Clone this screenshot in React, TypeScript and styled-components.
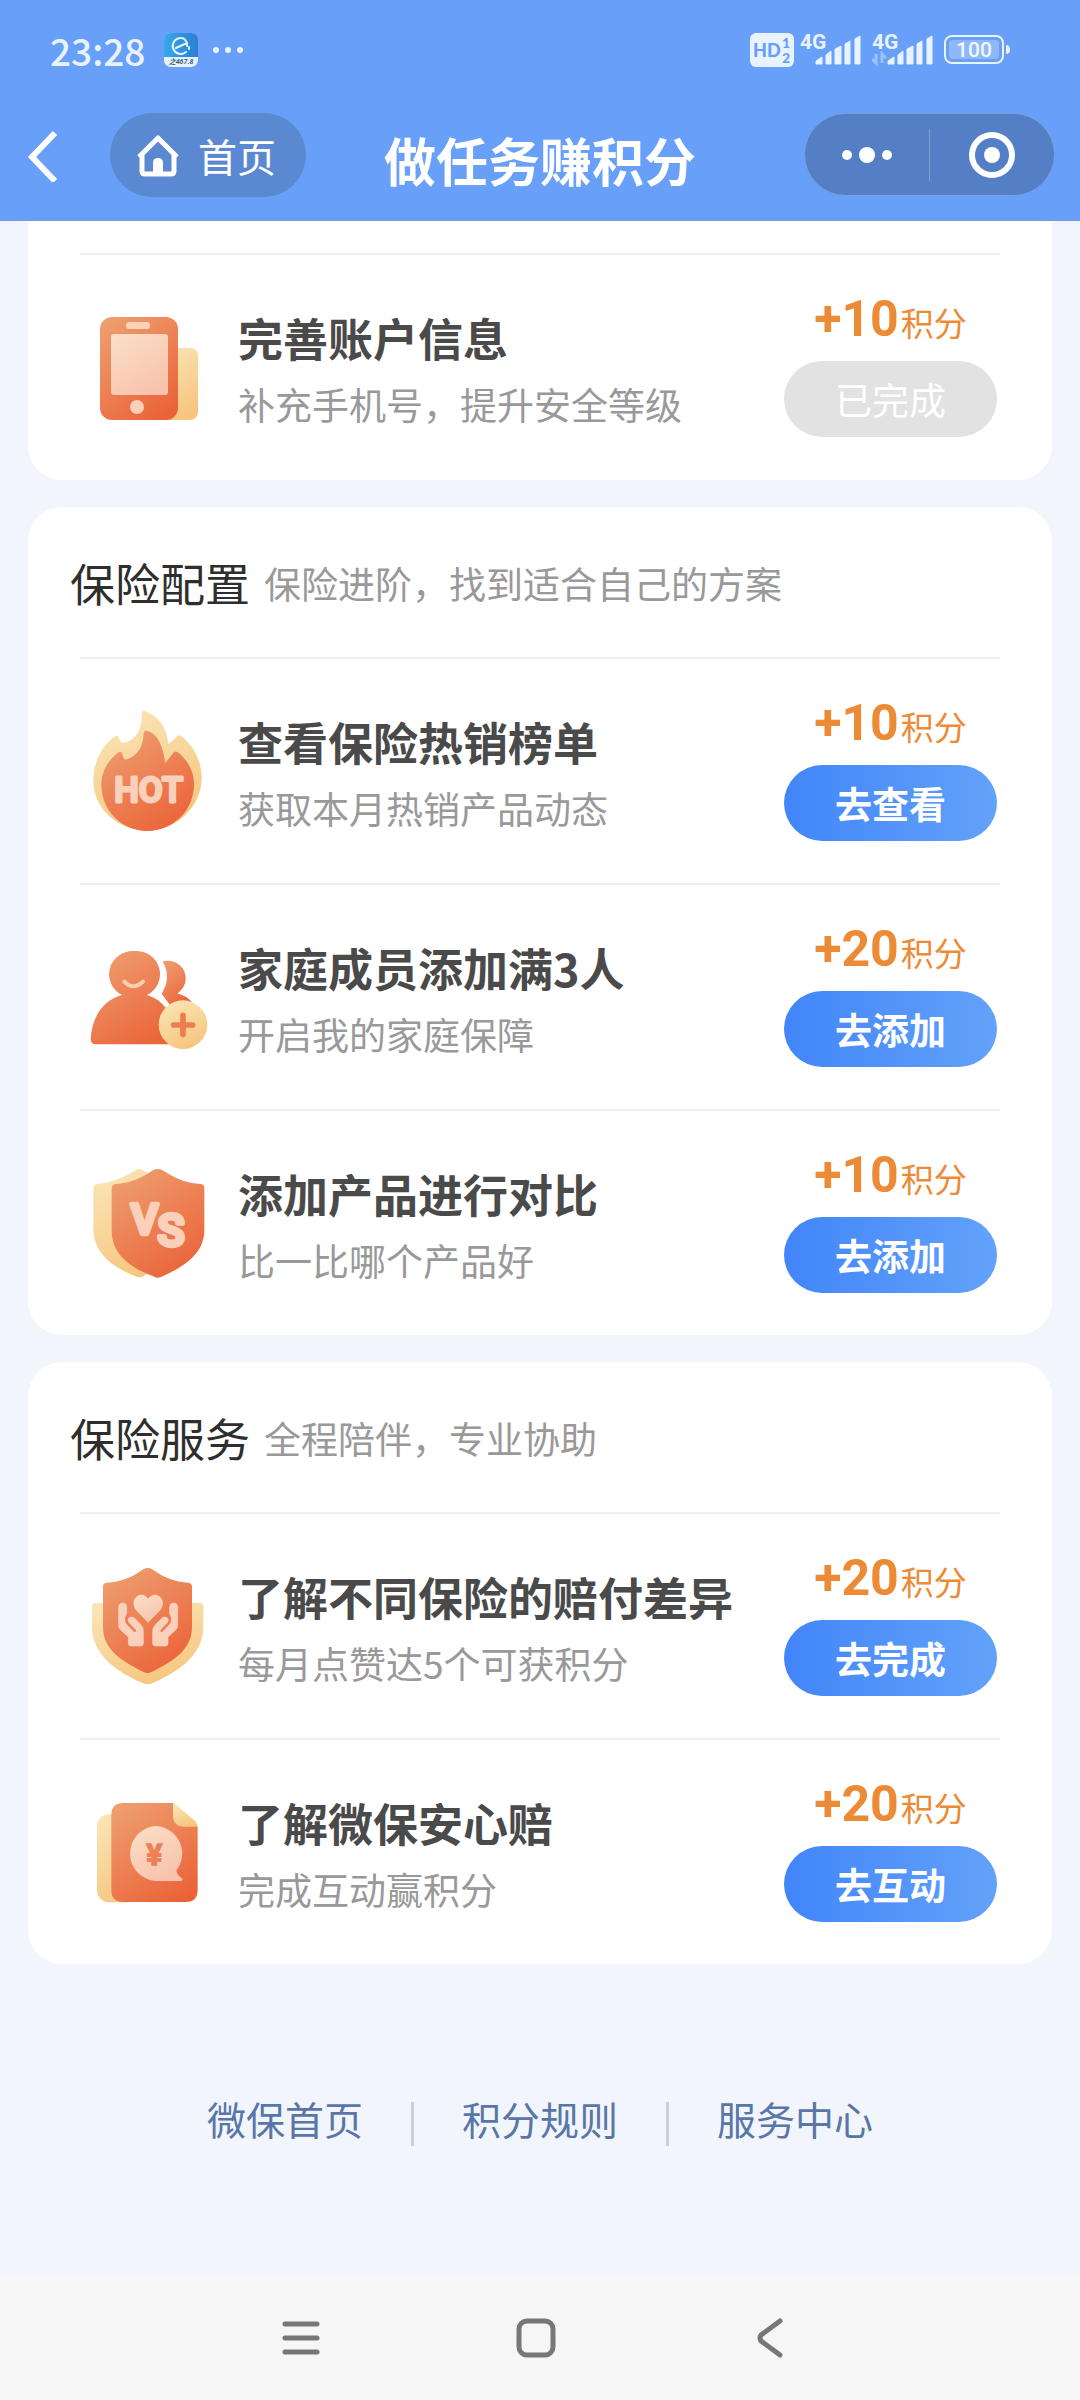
import React from 'react';
import styled, { createGlobalStyle } from 'styled-components';

const GlobalStyle = createGlobalStyle`
  * { box-sizing: border-box; }
  html, body { margin: 0; padding: 0; }
  body {
    background: #f2f5fb;
    font-family: "Noto Sans CJK SC", "Noto Sans", sans-serif;
  }
  button { font: inherit; border: 0; padding: 0; margin: 0; background: none; color: inherit; cursor: pointer; }
  h1, h2, h3, p, ul { margin: 0; padding: 0; font-weight: 400; }
  ul { list-style: none; }
  svg { display: block; flex: none; }
`;

const Page = styled.div`
  min-height: 100vh;
  display: flex;
  flex-direction: column;
`;

const Header = styled.header`
  background: #689ff8;
  border-bottom: 1px solid #759dda;
  color: #fff;
`;

const StatusBar = styled.div`
  height: 100px;
  padding: 0 70px 0 50px;
  display: flex;
  align-items: center;
  justify-content: space-between;
  color: #e9f2ff;
`;

const StatusGroup = styled.div<{ $gap: number }>`
  display: flex;
  align-items: center;
  gap: ${p => p.$gap}px;
`;

const Clock = styled.time`
  font-size: 37px;
  line-height: 44px;
  font-weight: 500;
`;

const NavBar = styled.nav`
  height: 120px;
  padding: 13px 25px 0;
  display: grid;
  grid-template-columns: 1fr auto 1fr;
  align-items: start;
`;

const NavLeft = styled.div`
  display: flex;
  align-items: center;
  gap: 49px;
`;

const BackButton = styled.button`
  width: 36px;
  height: 84px;
  display: grid;
  place-items: center;
`;

const HomeButton = styled.button`
  height: 84px;
  padding: 0 30px 0 26px;
  display: flex;
  align-items: center;
  gap: 18px;
  border-radius: 42px;
  background: #5a89d1;
  font-size: 39px;
  line-height: 84px;
`;

const PageTitle = styled.h1`
  font-size: 52px;
  line-height: 94px;
  font-weight: 700;
`;

const Capsule = styled.div`
  justify-self: end;
  width: 251px;
  height: 83px;
  display: flex;
  align-items: center;
  border: 1px solid #779fdc;
  border-radius: 42px;
  background: #547fc4;
`;

const CapsuleButton = styled.button`
  flex: 1;
  height: 100%;
  display: grid;
  place-items: center;
`;

const CapsuleDivider = styled.span`
  width: 1px;
  height: 52px;
  background: #7d9fd3;
`;

const Main = styled.main`
  padding: 0 28px;
  display: flex;
  flex-direction: column;
  gap: 27px;
`;

const Card = styled.section<{ $continued?: boolean }>`
  background: #fff;
  border-radius: ${p => (p.$continued ? '0 0 34px 34px' : '34px')};
  padding: ${p => (p.$continued ? '32px 0 1px' : '0')};
`;

const CardHeader = styled.header`
  height: 150px;
  padding: 2px 42px 0;
  display: flex;
  align-items: center;
  gap: 14px;
`;

const CardTitle = styled.h2`
  font-size: 45px;
  line-height: 64px;
  color: #2e2e2e;
`;

const Caption = styled.p`
  font-size: 37px;
  line-height: 48px;
  color: #999;
`;

const TaskRow = styled.li`
  height: 226px;
  margin: 0 52px;
  padding: 0 3px;
  border-top: 2px solid #eee;
  display: flex;
  align-items: center;
  gap: 27px;
`;

const TaskText = styled.div`
  flex: 1;
  min-width: 0;
  display: flex;
  flex-direction: column;
  gap: 10px;
  white-space: nowrap;
`;

const TaskTitle = styled.h3`
  font-size: 45px;
  line-height: 64px;
  font-weight: 700;
  color: #4a4a4a;
`;

const TaskAction = styled.div`
  width: 213px;
  display: flex;
  flex-direction: column;
  align-items: center;
  gap: 16px;
`;

const Points = styled.p`
  height: 48px;
  display: flex;
  align-items: baseline;
  gap: 2px;
  color: #ec8a35;
  font-size: 33px;
  line-height: 44px;
`;

const PointsValue = styled.strong`
  font-family: Roboto, "Noto Sans", sans-serif;
  font-size: 50px;
  font-weight: 700;
`;

const TaskButton = styled.button`
  width: 100%;
  height: 76px;
  border-radius: 38px;
  background: linear-gradient(90deg, #4285f9, #62a2fa);
  color: #fff;
  font-size: 37px;
  line-height: 76px;
  font-weight: 700;
  &:disabled {
    background: #e2e2e2;
    font-weight: 400;
    cursor: default;
  }
`;

const FooterLinks = styled.footer`
  margin-top: 126px;
  padding-bottom: 128px;
  display: flex;
  justify-content: center;
  align-items: flex-end;
  gap: 48px;
`;

const FooterLink = styled.a`
  font-size: 39px;
  line-height: 56px;
  color: #5877a8;
  text-decoration: none;
`;

const FooterDivider = styled.span`
  width: 3px;
  height: 44px;
  background: #ccd0d6;
`;

const SystemNav = styled.nav`
  margin-top: auto;
  height: 124px;
  padding: 0 191px 0 183px;
  display: flex;
  background: #f6f6f6;
`;

const SystemButton = styled.button`
  flex: 1;
  display: grid;
  place-items: center;
`;

const Gradients = () => (
  <svg width="0" height="0" style={{ position: 'absolute' }} aria-hidden="true">
    <defs>
      <linearGradient id="coral" x1="0.2" y1="0" x2="0.8" y2="1">
        <stop offset="0" stopColor="#ee9d6e" />
        <stop offset="1" stopColor="#eb6238" />
      </linearGradient>
      <linearGradient id="sand" x1="0.3" y1="0" x2="0.7" y2="1">
        <stop offset="0" stopColor="#fae4b4" />
        <stop offset="1" stopColor="#f6c47c" />
      </linearGradient>
      <linearGradient id="blush" x1="0.1" y1="0" x2="0.7" y2="1">
        <stop offset="0" stopColor="#fbdfc6" />
        <stop offset="1" stopColor="#f8c2ac" />
      </linearGradient>
      <linearGradient id="appBlue" x1="0" y1="0" x2="1" y2="0">
        <stop offset="0" stopColor="#35a8ee" />
        <stop offset="1" stopColor="#2b7fd2" />
      </linearGradient>
    </defs>
  </svg>
);

const PhoneIcon = () => (
  <svg width="128" height="128" viewBox="83 302 128 128">
    <rect x="150" y="347" width="48" height="72" rx="8" fill="url(#sand)" />
    <rect x="100" y="316" width="78" height="103" rx="12" fill="url(#coral)" />
    <rect x="126" y="321" width="24" height="7" rx="3" fill="#fbd3b8" />
    <rect x="111" y="333" width="57" height="61" rx="3" fill="url(#blush)" />
    <circle cx="137" cy="406" r="7" fill="#fbd0ba" />
  </svg>
);

const HotIcon = () => (
  <svg width="128" height="128" viewBox="69 78 384 384">
    <path
      fill="url(#sand)"
      d="M246 94Q249 86 258 91C300 108 322 145 325 190L350 167Q358 159 366 167C404 198 425 242 425 292C425 375 350 449 262 449C172 449 100 380 100 300C100 242 125 195 165 166Q171 161 176 169Q181 184 188 187C228 178 246 150 246 94Z"
    />
    <path
      fill="url(#coral)"
      d="M251 155Q254 148 262 150C298 160 310 205 316 246L339 216Q347 207 356 216C386 240 402 275 402 310C402 388 340 450 262 450C184 450 124 388 124 310C124 275 142 240 173 216Q182 208 186 217Q190 235 196 236C234 226 250 196 251 155Z"
    />
    <text
      x="266" y="363" textAnchor="middle" fontFamily="Roboto, sans-serif" fontWeight="500" fontSize="104"
      fill="#fad0ba" stroke="#fad0ba" strokeWidth="9" strokeLinejoin="round"
    >HOT</text>
  </svg>
);

const FamilyIcon = () => (
  <svg width="128" height="128" viewBox="69 66 384 384">
    <path
      fill="url(#coral)"
      d="M314 150C350 146 377 170 377 202C377 224 366 236 352 248C372 252 388 262 396 274L330 282L305 248C325 218 326 184 309 154Q309 150 314 150Z"
    />
    <path
      fill="url(#coral)"
      d="M222 120A72 70 0 0 1 261 252C310 266 345 315 350 380Q350 400 332 400H108Q92 400 92 384C96 318 128 268 186 252A72 70 0 0 1 222 120Z"
    />
    <path d="M193 212Q220 240 249 212" fill="none" stroke="#fbcfb4" strokeWidth="12" strokeLinecap="round" />
    <circle cx="369" cy="341" r="73" fill="url(#sand)" />
    <path d="M369 313V370M341 342H398" stroke="#eb7d50" strokeWidth="17" strokeLinecap="round" />
  </svg>
);

const VersusIcon = () => (
  <svg width="128" height="128" viewBox="69 54 384 384">
    <path
      fill="url(#sand)"
      d="M226 88Q238 80 250 88C280 108 315 122 350 128V270C350 330 310 370 250 406Q238 412 226 406C150 376 100 330 100 264V142Q100 130 112 129C155 126 190 110 226 88Z"
    />
    <path
      fill="url(#coral)"
      d="M279 88Q293 80 308 88C345 112 380 128 422 129Q433 130 433 142V266C433 335 380 372 308 406Q293 414 279 406C200 374 155 335 155 266V142Q155 130 167 129C208 128 244 112 279 88Z"
    />
    <g
      fontFamily="Roboto, sans-serif" fontWeight="500" fill="#fad0ba" stroke="#fad0ba"
      strokeWidth="13" strokeLinejoin="round"
    >
      <text x="254" y="280" textAnchor="middle" fontSize="126">V</text>
      <text x="333" y="314" textAnchor="middle" fontSize="134">S</text>
    </g>
  </svg>
);

const CareIcon = () => (
  <svg width="128" height="128" viewBox="69 96 384 384">
    <path
      fill="url(#sand)"
      d="M106 219H420Q430 219 430 230V290C430 375 355 425 276 460Q263 466 250 460C170 425 96 375 96 290V230Q96 219 106 219Z"
    />
    <path
      fill="url(#coral)"
      d="M250 118Q263 110 277 118C310 142 345 157 385 158Q396 159 396 170V290C396 360 340 392 275 426Q263 432 251 426C185 392 129 360 129 290V170Q129 159 140 158C182 157 216 142 250 118Z"
    />
    <path
      fill="url(#blush)"
      d="M264 278L230 243C216 228 217 203 238 195C250 192 259 198 264 206C270 198 280 192 291 195C312 203 314 228 299 243Z"
    />
    <g fill="#fad2bc" stroke="#fad2bc" strokeWidth="2" strokeLinejoin="round">
      <path d="M176 231Q176 219 188 219Q200 219 200 231V269L223 294L205 278Q200 268 209 262Q217 259 224 265L243 284Q250 292 250 303V340Q250 348 242 348H213Q205 348 205 340V321L182 300Q176 294 176 287Z" />
      <path d="M353 231Q353 219 341 219Q329 219 329 231V269L306 294L324 278Q329 268 320 262Q312 259 305 265L286 284Q278 292 278 303V340Q278 348 286 348H316Q324 348 324 340V321L347 300Q353 294 353 287Z" />
    </g>
    <g fill="none" stroke="#ec8057" strokeWidth="8" strokeLinecap="round" strokeLinejoin="round">
      <path d="M204 254Q195 268 203 280L224 302" />
      <path d="M325 254Q334 268 326 280L305 302" />
    </g>
  </svg>
);

const ClaimIcon = () => (
  <svg width="128" height="128" viewBox="69 774 384 384">
    <rect x="111" y="853" width="120" height="264" rx="36" fill="url(#sand)" />
    <path
      fill="url(#coral)"
      d="M190 819H339L413 890V1080Q413 1116 377 1116H190Q154 1116 154 1080V855Q154 819 190 819Z"
    />
    <path fill="url(#sand)" d="M339 822Q345 822 352 828L406 874Q413 882 413 890H372Q339 890 339 856Z" />
    <path
      fill="url(#blush)"
      d="M284 888A83 83 0 0 1 349 1022Q352 1036 366 1045Q370 1053 361 1053H284A83 83 0 0 1 284 888Z"
    />
    <text
      x="283" y="1006" textAnchor="middle" fontFamily="Roboto, sans-serif" fontWeight="700" fontSize="90"
      fill="#ec8057" stroke="#ec8057" strokeWidth="4"
    >¥</text>
  </svg>
);

const AppBadge = () => (
  <svg width="34" height="34" viewBox="0 0 34 34">
    <rect width="34" height="34" rx="7" fill="#e4f3fd" />
    <path d="M0 24V7Q0 0 7 0H27Q34 0 34 7V24Z" fill="url(#appBlue)" />
    <path
      d="M12 15L23 10Q21 5 17 5A8 8 0 1 0 22 19M23 10V13M25 16V14"
      fill="none" stroke="#e6f5ff" strokeWidth="2" strokeLinecap="round"
    />
    <text x="17" y="31" textAnchor="middle" fontFamily="Roboto, sans-serif" fontWeight="700" fontStyle="italic" fontSize="7" fill="#45617c">之467.8</text>
  </svg>
);

const MoreDots = () => (
  <svg width="32" height="8" viewBox="0 0 32 8">
    <circle cx="4" cy="4" r="3" fill="#e9f2ff" />
    <circle cx="16" cy="4" r="3" fill="#e9f2ff" />
    <circle cx="28" cy="4" r="3" fill="#e9f2ff" />
  </svg>
);

const HdBadge = () => (
  <svg width="44" height="34" viewBox="0 0 44 34">
    <rect width="44" height="34" rx="6" fill="#e9f2ff" />
    <g fontFamily="Lato, sans-serif" fontWeight="900" fill="#689ff8">
      <text x="3" y="24" fontSize="18">HD</text>
      <text x="32" y="15" fontSize="14">1</text>
      <text x="32" y="30" fontSize="14">2</text>
    </g>
  </svg>
);

const Signal = ({ data }: { data?: boolean }) => (
  <svg width="62" height="46" viewBox="0 -6 62 46">
    <text x="0" y="16" fontFamily="Roboto, sans-serif" fontWeight="700" fontSize="21" fill="#e9f2ff">4G</text>
    {data && (
      <path d="M0 26L4 30V21M10 30V21L14 25" fill="none" stroke="#9cc1fb" strokeWidth="3" />
    )}
    <path
      d="M16 31V28L22 24V31ZM26 31V22L31 18V31ZM35 31V16L41 13V31ZM45 31V11L50 8V31ZM55 31V6L60 3V31Z"
      fill="#e9f2ff" stroke="#e9f2ff" strokeLinejoin="round"
    />
  </svg>
);

const Battery = () => (
  <svg width="66" height="32" viewBox="0 0 66 32">
    <rect x="1" y="2" width="58" height="27" rx="7" fill="none" stroke="#e9f2ff" strokeWidth="2" />
    <rect x="5" y="6" width="50" height="19" rx="4" fill="#8fb8fa" />
    <path d="M62 11Q66 11 66 16Q66 20 62 20Z" fill="#e9f2ff" />
    <text x="30" y="23" textAnchor="middle" fontFamily="Roboto, sans-serif" fontWeight="500" fontSize="21" fill="#f2f7ff">100</text>
  </svg>
);

interface Task {
  title: string;
  note: string;
  points: number;
  action: string;
  done?: boolean;
  icon: React.ReactNode;
}

interface Group {
  title?: string;
  note?: string;
  tasks: Task[];
}

const groups: Group[] = [
  {
    tasks: [
      { title: '完善账户信息', note: '补充手机号，提升安全等级', points: 10, action: '已完成', done: true, icon: <PhoneIcon /> },
    ],
  },
  {
    title: '保险配置',
    note: '保险进阶，找到适合自己的方案',
    tasks: [
      { title: '查看保险热销榜单', note: '获取本月热销产品动态', points: 10, action: '去查看', icon: <HotIcon /> },
      { title: '家庭成员添加满3人', note: '开启我的家庭保障', points: 20, action: '去添加', icon: <FamilyIcon /> },
      { title: '添加产品进行对比', note: '比一比哪个产品好', points: 10, action: '去添加', icon: <VersusIcon /> },
    ],
  },
  {
    title: '保险服务',
    note: '全程陪伴，专业协助',
    tasks: [
      { title: '了解不同保险的赔付差异', note: '每月点赞达5个可获积分', points: 20, action: '去完成', icon: <CareIcon /> },
      { title: '了解微保安心赔', note: '完成互动赢积分', points: 20, action: '去互动', icon: <ClaimIcon /> },
    ],
  },
];

const links = ['微保首页', '积分规则', '服务中心'];

export default function App() {
  return (
    <Page>
      <GlobalStyle />
      <Gradients />
      <Header>
        <StatusBar>
          <StatusGroup $gap={19}>
            <Clock>23:28</Clock>
            <StatusGroup $gap={14}>
              <AppBadge />
              <MoreDots />
            </StatusGroup>
          </StatusGroup>
          <StatusGroup $gap={10}>
            <StatusGroup $gap={6}>
              <HdBadge />
              <Signal />
            </StatusGroup>
            <Signal data />
            <Battery />
          </StatusGroup>
        </StatusBar>
        <NavBar>
          <NavLeft>
            <BackButton aria-label="返回">
              <svg width="32" height="54" viewBox="0 0 32 54">
                <path d="M28 5L5 29L28 53" fill="none" stroke="#fff" strokeWidth="6" />
              </svg>
            </BackButton>
            <HomeButton>
              <svg width="44" height="44" viewBox="0 0 44 44">
                <path
                  d="M3 24L22 5L41 24M6 22V38Q6 41 9 41H35Q38 41 38 38V22"
                  fill="none" stroke="#fff" strokeWidth="5" strokeLinejoin="round"
                />
                <path d="M17 41V30Q17 25 22 25Q27 25 27 30V41Z" fill="#fff" />
              </svg>
              首页
            </HomeButton>
          </NavLeft>
          <PageTitle>做任务赚积分</PageTitle>
          <Capsule>
            <CapsuleButton aria-label="更多">
              <svg width="50" height="18" viewBox="0 0 50 18">
                <circle cx="5" cy="9" r="5" fill="#fff" />
                <circle cx="25" cy="9" r="8" fill="#fff" />
                <circle cx="45" cy="9" r="5" fill="#fff" />
              </svg>
            </CapsuleButton>
            <CapsuleDivider />
            <CapsuleButton aria-label="关闭">
              <svg width="48" height="48" viewBox="0 0 48 48">
                <circle cx="24" cy="24" r="20" fill="none" stroke="#fff" strokeWidth="6" />
                <circle cx="24" cy="24" r="8" fill="#fff" />
              </svg>
            </CapsuleButton>
          </Capsule>
        </NavBar>
      </Header>

      <Main>
        {groups.map((group, i) => (
          <Card key={i} $continued={!group.title}>
            {group.title && (
              <CardHeader>
                <CardTitle>{group.title}</CardTitle>
                <Caption>{group.note}</Caption>
              </CardHeader>
            )}
            <ul>
              {group.tasks.map(task => (
                <TaskRow key={task.title}>
                  {task.icon}
                  <TaskText>
                    <TaskTitle>{task.title}</TaskTitle>
                    <Caption>{task.note}</Caption>
                  </TaskText>
                  <TaskAction>
                    <Points>
                      <PointsValue>+{task.points}</PointsValue>
                      积分
                    </Points>
                    <TaskButton disabled={task.done}>{task.action}</TaskButton>
                  </TaskAction>
                </TaskRow>
              ))}
            </ul>
          </Card>
        ))}
      </Main>

      <FooterLinks>
        {links.map((label, i) => (
          <React.Fragment key={label}>
            {i > 0 && <FooterDivider />}
            <FooterLink href="#">{label}</FooterLink>
          </React.Fragment>
        ))}
      </FooterLinks>

      <SystemNav>
        <SystemButton aria-label="最近任务">
          <svg width="40" height="40" viewBox="0 0 40 40">
            <path d="M4 6H36M4 20H36M4 34H36" stroke="#777" strokeWidth="5" strokeLinecap="round" />
          </svg>
        </SystemButton>
        <SystemButton aria-label="主屏幕">
          <svg width="40" height="40" viewBox="0 0 40 40">
            <rect x="3" y="3" width="34" height="34" rx="8" fill="none" stroke="#777" strokeWidth="5" />
          </svg>
        </SystemButton>
        <SystemButton aria-label="返回上一级">
          <svg width="40" height="40" viewBox="0 0 40 40">
            <path d="M29 3L10 17Q8 20 10 23L29 37" fill="none" stroke="#777" strokeWidth="5" strokeLinecap="round" />
          </svg>
        </SystemButton>
      </SystemNav>
    </Page>
  );
}
